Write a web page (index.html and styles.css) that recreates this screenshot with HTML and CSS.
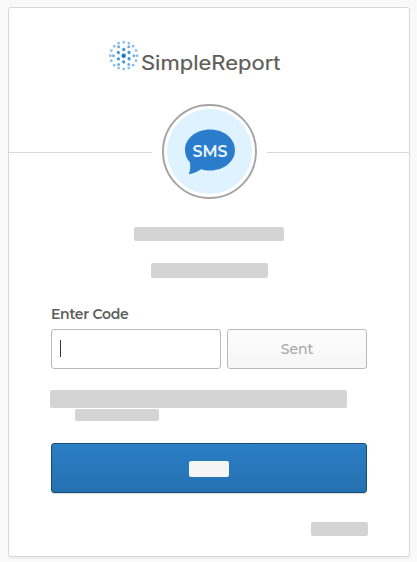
FILE: index.html
```html
<!DOCTYPE html>
<html lang="en">
<head>
<meta charset="utf-8">
<title>SimpleReport</title>
<link rel="stylesheet" href="styles.css">
</head>
<body>
<main class="card">
  <header class="header">
    <svg class="logo" width="180" height="44" viewBox="0 0 180 44" role="img" aria-label="SimpleReport">
      <g fill="none" stroke-linecap="round" transform="translate(15.700 15.700)">
        <circle r="2.200" fill="#2378c3"/>
        <circle r="6.200" pathLength="60" stroke="#4a97da" stroke-width="3.300" stroke-dasharray="0 10" transform="rotate(30)"/>
        <circle r="10.200" pathLength="60" stroke="#73ade5" stroke-width="3" stroke-dasharray="0 10"/>
        <circle r="13.400" pathLength="160" stroke="#8fc0ec" stroke-width="2.900" stroke-dasharray="0 10"/>
      </g>
      <text class="brand" x="33" y="30" textLength="139.500" lengthAdjust="spacingAndGlyphs">SimpleReport</text>
    </svg>
  </header>
  <div class="factor">
    <svg width="95" height="95" viewBox="0 0 95 95" role="img" aria-label="SMS">
      <circle cx="47.500" cy="47.500" r="46.500" fill="#fff" stroke="#a5a5a5" stroke-width="2"/>
      <circle cx="47.500" cy="47.500" r="42.500" fill="#def2ff"/>
      <path d="M48 25.500C62 25.500 73 34.500 73 46S62 66.500 48 66.500C44 66.500 42 66 39 65.200C35.500 67.800 31 69.500 26.700 70.300C28.300 67 28.500 62.500 28 58.500C24.800 55 23 51 23 46C23 34.500 34 25.500 48 25.500Z" fill="#2b7dcb"/>
      <text class="sms" x="30.500" y="52.500" textLength="35" lengthAdjust="spacingAndGlyphs">SMS</text>
    </svg>
  </div>
  <form class="form">
    <div class="bar title"></div>
    <div class="bar subtitle"></div>
    <label class="label" for="code">Enter Code</label>
    <div class="row">
      <div class="input" id="code" role="textbox"><span class="caret"></span></div>
      <div class="sent">Sent</div>
    </div>
    <div class="bar remember"></div>
    <div class="bar remember-more"></div>
    <div class="verify"><span class="verify-text"></span></div>
    <div class="bar signout"></div>
  </form>
</main>
</body>
</html>
```
FILE: styles.css
```css
* { box-sizing: border-box; }
body {
  margin: 0;
  height: 562px;
  padding: 7px 7px 5px 8px;
  background: #f9f9f9;
  font-family: "Montserrat", "Inter", sans-serif;
  overflow: hidden;
}
.card {
  width: 402px;
  height: 550px;
  background: #fff;
  border: 1px solid #d8d8d8;
  border-radius: 3px;
  box-shadow: 0 2px 0 rgba(175, 175, 175, .12);
}
.header { height: 96px; padding: 32px 0 0 99px; }
.logo { display: block; overflow: visible; }
.brand { font-family: "Inter", sans-serif; font-size: 20px; font-weight: 400; fill: #5d5d57; stroke: #5d5d57; stroke-width: .2px; }
.factor {
  display: flex;
  align-items: center;
  gap: 10px;
  height: 95px;
}
.factor::before, .factor::after {
  content: "";
  flex: 1;
  height: 1px;
  margin-top: 2px;
  background: #d8d8d8;
}
.factor svg { flex: none; }
.sms { font-size: 17px; font-weight: 600; fill: #e9f6ff; }
.form {
  display: flex;
  flex-direction: column;
  padding: 28px 42px 0;
}
.bar { background: #d4d4d4; border-radius: 2px; }
.title { width: 150px; height: 14px; margin-left: 83px; }
.subtitle { width: 117px; height: 15px; margin: 22px 0 0 100px; }
.label {
  align-self: flex-start;
  margin-top: 27px;
  height: 24px;
  font-size: 14px;
  font-weight: 600;
  line-height: 18px;
  letter-spacing: -.28px;
  color: #5e5e5e;
}
.row { display: flex; gap: 6px; height: 40px; }
.input, .sent { border: 1px solid #b8b8b8; border-radius: 3px; }
.input { width: 170px; padding: 10px 8px; }
.caret { display: block; width: 1px; height: 17px; background: #333; }
.sent {
  width: 140px;
  background: linear-gradient(#fcfcfc, #f6f6f6);
  color: #a7a7a7;
  font-size: 14px;
  font-weight: 500;
  line-height: 38px;
  text-align: center;
  letter-spacing: 0;
}
.remember { width: 297px; height: 18px; margin: 21px 0 0 -1px; }
.remember-more { width: 84px; height: 12px; margin: 1px 0 0 24px; }
.verify {
  height: 50px;
  margin-top: 22px;
  padding: 17px 0 0 137px;
  background: linear-gradient(#2b7ec4, #2471b1);
  border: 1px solid #164b75;
  border-radius: 3px;
  box-shadow: 0 1px 0 #d8dde2, inset 0 1px 0 #3487c6;
}
.verify-text {
  display: block;
  width: 40px;
  height: 16px;
  background: #f5f5f5;
  border-radius: 2px;
}
.signout { align-self: flex-end; width: 57px; height: 14px; margin: 29px -1px 0 0; }
```
